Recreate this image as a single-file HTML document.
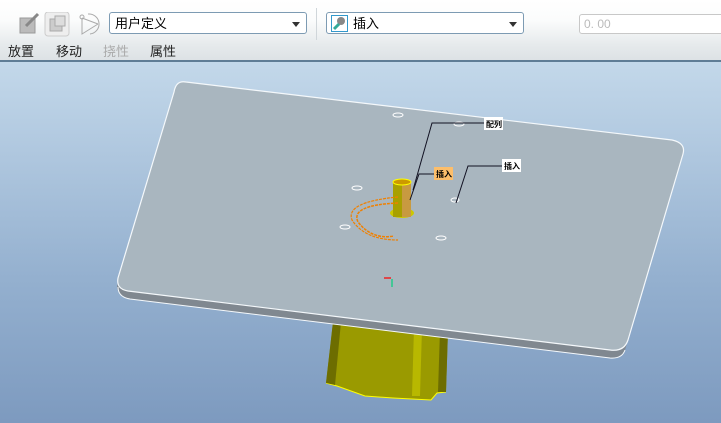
<!DOCTYPE html><html><head><meta charset="utf-8"><style>
body{margin:0;width:721px;height:423px;overflow:hidden;font-family:"Liberation Sans","Noto Sans CJK SC",sans-serif;position:relative}
.tb{position:absolute;left:0;top:0;width:721px;height:61px;background:linear-gradient(#fff 0,#fbfcfc 20px,#e6eaec 45px,#dde2e5 60px)}
.vp{position:absolute;left:0;top:62px;width:721px;height:361px;background:linear-gradient(#c3d8ea,#94b0cf 60%,#7d9abf)}
.line{position:absolute;left:0;top:60px;width:721px;height:2px;background:#5f7d96}
.sel{position:absolute;height:22px;border:1px solid #7d9bb3;border-radius:3px;background:#fff;font-size:13px;line-height:22px;box-sizing:border-box}
.arr{position:absolute;right:6px;top:9px;border:4px solid transparent;border-top:5px solid #333;border-bottom:0}
.lab{position:absolute;top:41px;font-size:13px;color:#222}
</style></head><body>
<div class="tb"></div>
<svg style="position:absolute;left:18px;top:12px" width="85" height="26">
<rect x="2" y="6" width="15" height="15" fill="#bbb" stroke="#999"/><path d="M8 14 L20 2" stroke="#888" stroke-width="3"/>
<rect x="27" y="0" width="24" height="24" rx="3" fill="#eee" stroke="#ccc"/><rect x="32" y="7" width="12" height="12" fill="#ccc" stroke="#aaa"/><rect x="37" y="4" width="10" height="10" fill="#ddd" stroke="#aaa"/>
<circle cx="64" cy="5" r="2" fill="none" stroke="#aaa"/><path d="M64 6 V22 L80 12 M64 6 L80 12 M70 2 A10 10 0 0 1 72 22" stroke="#aaa" fill="none"/>
</svg>
<div class="sel" style="left:109px;top:12px;width:198px;padding-left:5px">用户定义<div class="arr"></div></div>
<div style="position:absolute;left:316px;top:8px;width:1px;height:32px;background:#d0d6da"></div>
<div class="sel" style="left:326px;top:12px;width:198px;padding-left:26px">插入<div class="arr"></div>
<svg style="position:absolute;left:4px;top:2px" width="17" height="17"><rect x="0.5" y="0.5" width="16" height="16" fill="#fff" stroke="#39c"/><circle cx="10" cy="6" r="4" fill="#888"/><path d="M3 14 L8 9" stroke="#3a9" stroke-width="3"/></svg></div>
<div class="sel" style="left:579px;top:14px;width:150px;height:20px;border-color:#c8c8c8;color:#bbb;line-height:19px;padding-left:4px;font-size:12px">0. 00</div>
<div class="lab" style="left:8px">放置</div><div class="lab" style="left:56px">移动</div><div class="lab" style="left:103px;color:#aaa">挠性</div><div class="lab" style="left:150px">属性</div>
<div class="line"></div>
<div class="vp"></div>
<svg style="position:absolute;left:0;top:0" width="721" height="423">
<path d="M333 322 L448 330 L446 392 L437 393 L431 400 L393 398 L365 396 L337 386 L326 383 Z" fill="#9a9a00"/>
<path d="M326 383 L337 386 L365 396 L393 398 L431 400 L437 393 L446 392" stroke="#ffff00" fill="none"/>
<path d="M333 322 L326 383 L335 385 L341 322 Z" fill="#6d6d00"/><path d="M440 330 L438 392 L446 392 L448 330Z" fill="#6d6d00"/><path d="M414 328 L412 396 L420 396 L422 328Z" fill="#b8b800"/>
<path d="M118 278 L117 287 Q118 297 130 299 L610 358 Q622 359 625 350 L628 340 Q624 352 610 350 L128 291 Q116 289 118 278Z" fill="#808890"/>
<path d="M118 287 Q118 297 130 299 L610 358 Q622 359 625 350" stroke="#f4f8fb" fill="none"/>
<path d="M186 82 L672 140 Q686 143 683 154 L628 340 Q624 352 610 350 L128 291 Q116 289 118 278 L174 92 Q176 80 186 82Z" fill="#a9b6bf" stroke="#f4f8fb" stroke-width="1.2"/>
<g fill="none" stroke="#fff" stroke-width="1"><ellipse cx="398" cy="115" rx="5" ry="2"/><ellipse cx="459" cy="124" rx="5" ry="2"/><ellipse cx="357" cy="188" rx="5" ry="2"/><ellipse cx="345" cy="227" rx="5" ry="2"/><ellipse cx="441" cy="238" rx="5" ry="2"/><ellipse cx="455" cy="200" rx="4" ry="2"/></g>
<ellipse cx="402" cy="213" rx="12" ry="5" fill="#ccc800"/>
<rect x="393" y="182" width="18" height="35" fill="#a8a000"/><rect x="402" y="183" width="9" height="34" fill="#c89a40"/><ellipse cx="402" cy="182" rx="9" ry="3" fill="#cc9900" stroke="#ff0"/>
<path d="M398 203 Q350 205 358 222 Q372 240 394 236" stroke="#f08000" stroke-dasharray="3 1" fill="none" stroke-width="1.5"/>
<path d="M398 197 Q345 202 352 220 Q365 240 398 240" stroke="#f08000" stroke-dasharray="3 1" fill="none" stroke-width="1.2"/>
<g stroke="#112" fill="none"><path d="M485 123 L432 123 L413 190"/><path d="M435 174 L419 174 L410 200"/><path d="M503 166 L468 166 L456 203"/></g>
<rect x="484" y="117" width="19" height="13" fill="#fff"/><text x="486" y="127" font-size="8" font-weight="bold">配列</text>
<rect x="434" y="167" width="19" height="13" fill="#fdbe6a"/><text x="436" y="177" font-size="8" font-weight="bold">插入</text>
<rect x="502" y="159" width="19" height="13" fill="#fff"/><text x="504" y="169" font-size="8" font-weight="bold">插入</text>
<path d="M384 278 H391" stroke="#e22" stroke-width="1.5"/><path d="M392 279 V287" stroke="#2c8" stroke-width="1.5"/>
</svg>
</body></html>
